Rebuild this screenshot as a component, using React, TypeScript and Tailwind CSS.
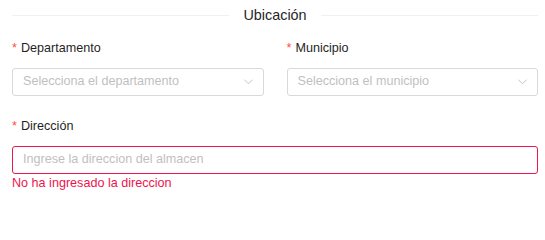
import type { ReactNode } from 'react';

const font = { fontFamily: '"Liberation Sans", Arial, sans-serif' };

export default function App() {
    return (
        <div
            className="h-[209px] w-[545px] bg-white pr-[7px] pl-3 text-[12.6px] text-[#1f1f1f]"
            style={font}
        >
            <div className="flex h-[30px] items-center">
                <div className="h-px flex-1 bg-[#f0f0f0]" />
                <span className="px-[14px] text-[14.4px] leading-none text-[#262626]">
                    Ubicación
                </span>
                <div className="h-px flex-1 bg-[#f0f0f0]" />
            </div>

            <div className="mt-[8.5px] grid grid-cols-2 gap-x-[23px]">
                <Field label="Departamento">
                    <SelectBox placeholder="Selecciona el departamento" />
                </Field>
                <Field label="Municipio">
                    <SelectBox placeholder="Selecciona el municipio" />
                </Field>
            </div>

            <div className="mt-[21px]">
                <Field label="Dirección">
                    <div className="flex h-[28px] items-center rounded-[3px] border border-[#f0134d] px-[10px] text-[#bfbfbf]">
                        Ingrese la direccion del almacen
                    </div>
                </Field>
                <p className="leading-[19px] text-[#f0134d]">
                    No ha ingresado la direccion
                </p>
            </div>
        </div>
    );
}

function Field({ label, children }: { label: string; children: ReactNode }) {
    return (
        <div>
            <div className="mb-[9px] flex h-[20px] items-center">
                <span className="mr-[4px] text-[#ff4d4f]">*</span>
                <span>{label}</span>
            </div>
            {children}
        </div>
    );
}

function SelectBox({ placeholder }: { placeholder: string }) {
    return (
        <div className="flex h-[28px] items-center justify-between rounded-[3px] border border-[#d9d9d9] pr-[9px] pl-[10px] text-[#bfbfbf]">
            <span>{placeholder}</span>
            <svg
                viewBox="0 0 12 12"
                className="h-[11px] w-[11px]"
                fill="none"
                stroke="#bfbfbf"
                strokeWidth="1"
            >
                <polyline points="1.5,4 6,8.5 10.5,4" />
            </svg>
        </div>
    );
}
